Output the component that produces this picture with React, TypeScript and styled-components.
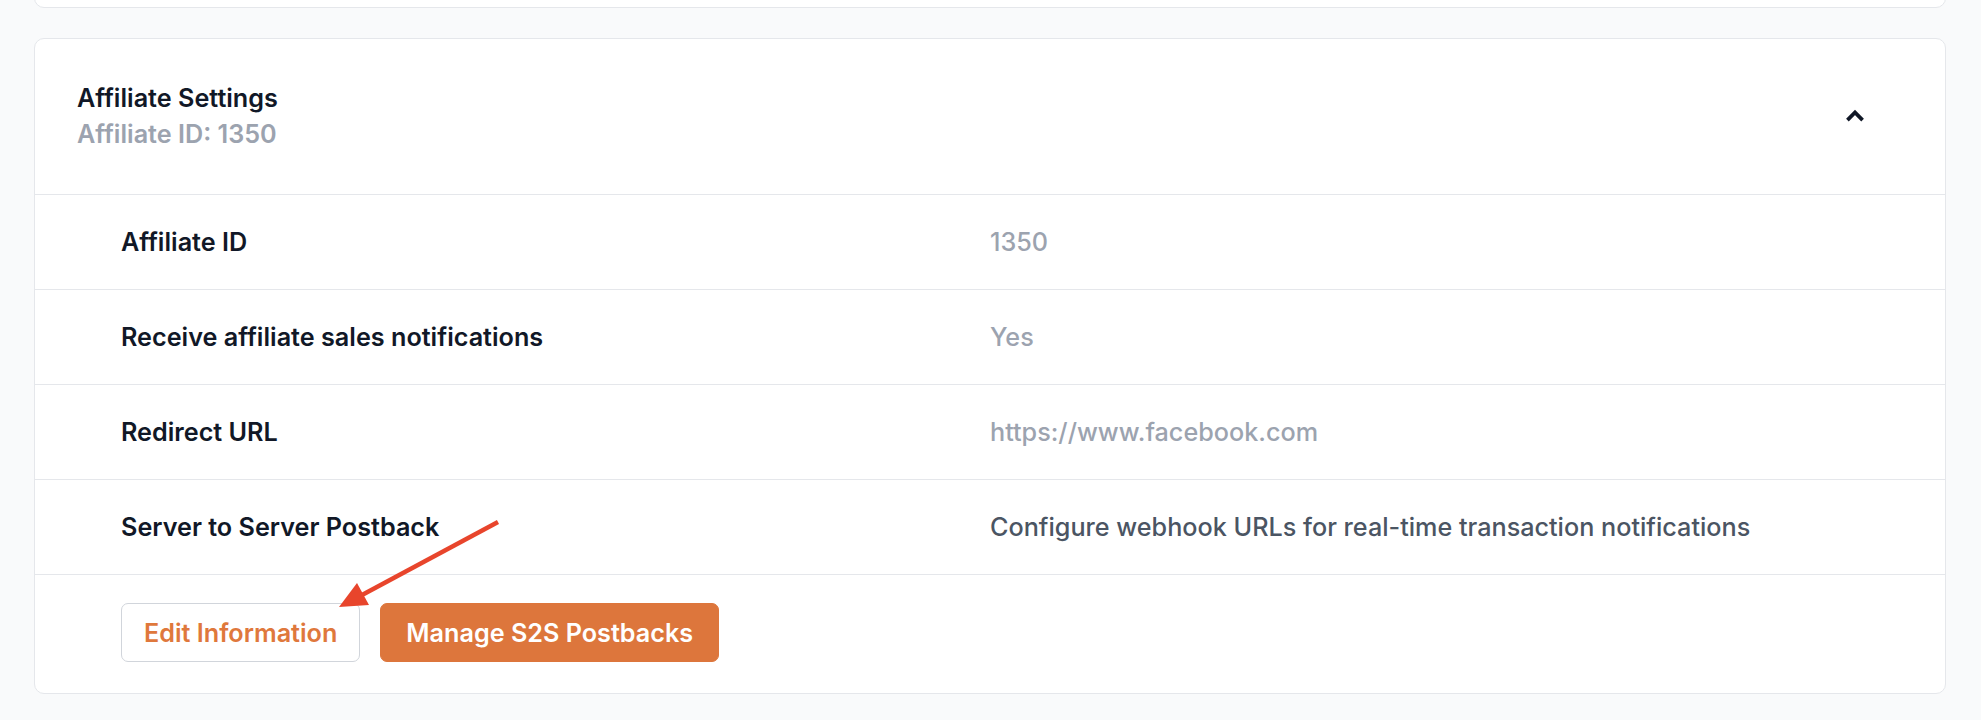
import React from "react";
import styled, { createGlobalStyle } from "styled-components";

const GlobalStyle = createGlobalStyle`
  html, body {
    margin: 0;
    padding: 0;
    background: #f9fafb;
    font-family: Inter, "Noto Sans", sans-serif;
    -webkit-font-smoothing: antialiased;
  }
`;

const Page = styled.div`
  position: relative;
  display: flex;
  flex-direction: column;
  gap: 30px;
  padding: 0 35px 28px 34px;
  overflow: hidden;
`;

// tail end of the card above, scrolled mostly out of view
const PrevCard = styled.div`
  height: 46px;
  margin-top: -40px;
  background: #fff;
  border: 1px solid #e5e7eb;
  border-radius: 10px;
`;

const Card = styled.section`
  background: #fff;
  border: 1px solid #e5e7eb;
  border-radius: 10px;
`;

const Header = styled.div`
  display: flex;
  align-items: center;
  justify-content: space-between;
  padding: 41px 76px 42px 42px;
  border-bottom: 1px solid #e5e7eb;
`;

const TitleBlock = styled.div`
  display: flex;
  flex-direction: column;
`;

const Title = styled.h2`
  margin: 0;
  font-size: 25.2px;
  line-height: 36px;
  font-weight: 600;
  color: #111827;
`;

const Subtitle = styled.div`
  font-size: 25.2px;
  line-height: 36px;
  font-weight: 600;
  color: #9ca3af;
`;

const ToggleButton = styled.button`
  display: flex;
  align-items: center;
  justify-content: center;
  padding: 0;
  border: 0;
  background: transparent;
  color: #111827;
  cursor: pointer;
`;

const Row = styled.div`
  display: grid;
  grid-template-columns: 1fr 1fr;
  align-items: center;
  padding: 29px 86px 29px;
  border-bottom: 1px solid #e5e7eb;
`;

const Label = styled.div`
  font-size: 25.2px;
  line-height: 36px;
  font-weight: 600;
  color: #111827;
`;

const Value = styled.div<{ $strong?: boolean }>`
  font-size: 25.2px;
  line-height: 36px;
  font-weight: 500;
  color: ${(p) => (p.$strong ? "#4b5563" : "#9ca3af")};
`;

const Actions = styled.div`
  display: flex;
  gap: 20px;
  padding: 28px 86px 31px;
`;

const Button = styled.button<{ $primary?: boolean }>`
  height: 59px;
  padding: 0 ${(p) => (p.$primary ? "25px" : "22px")};
  border-radius: 7px;
  font-family: inherit;
  font-size: 25.2px;
  font-weight: 600;
  cursor: pointer;
  border: 1px solid ${(p) => (p.$primary ? "#dd763c" : "#d1d5db")};
  background: ${(p) => (p.$primary ? "#dd763c" : "#fff")};
  color: ${(p) => (p.$primary ? "#fff" : "#df783c")};
`;

const Pointer = styled.svg`
  position: absolute;
  left: 0;
  top: 0;
  pointer-events: none;
`;

const rows = [
  { label: "Affiliate ID", value: "1350" },
  { label: "Receive affiliate sales notifications", value: "Yes" },
  { label: "Redirect URL", value: "https://www.facebook.com" },
  {
    label: "Server to Server Postback",
    value: "Configure webhook URLs for real-time transaction notifications",
    strong: true,
  },
];

const ChevronUp = () => (
  <svg width="28" height="28" viewBox="0 0 24 24" fill="none">
    <path
      d="M5.5 15.5L12 9l6.5 6.5"
      stroke="currentColor"
      strokeWidth="3.2"
      strokeLinejoin="miter"
    />
  </svg>
);

const App = () => {
  return (
    <>
      <GlobalStyle />
      <Page>
        <PrevCard />

        <Card>
          <Header>
            <TitleBlock>
              <Title>Affiliate Settings</Title>
              <Subtitle>Affiliate ID: 1350</Subtitle>
            </TitleBlock>
            <ToggleButton aria-label="Collapse">
              <ChevronUp />
            </ToggleButton>
          </Header>

          {rows.map((r) => (
            <Row key={r.label}>
              <Label>{r.label}</Label>
              <Value $strong={r.strong}>{r.value}</Value>
            </Row>
          ))}

          <Actions>
            <Button>Edit Information</Button>
            <Button $primary>Manage S2S Postbacks</Button>
          </Actions>
        </Card>

        <Pointer width="1981" height="720" viewBox="0 0 1981 720">
          <line x1="498" y1="522" x2="362" y2="595" stroke="#e8452c" strokeWidth="4.5" />
          <polygon points="339,607 369,605 357,583" fill="#e8452c" />
        </Pointer>
      </Page>
    </>
  );
};

export default App;
